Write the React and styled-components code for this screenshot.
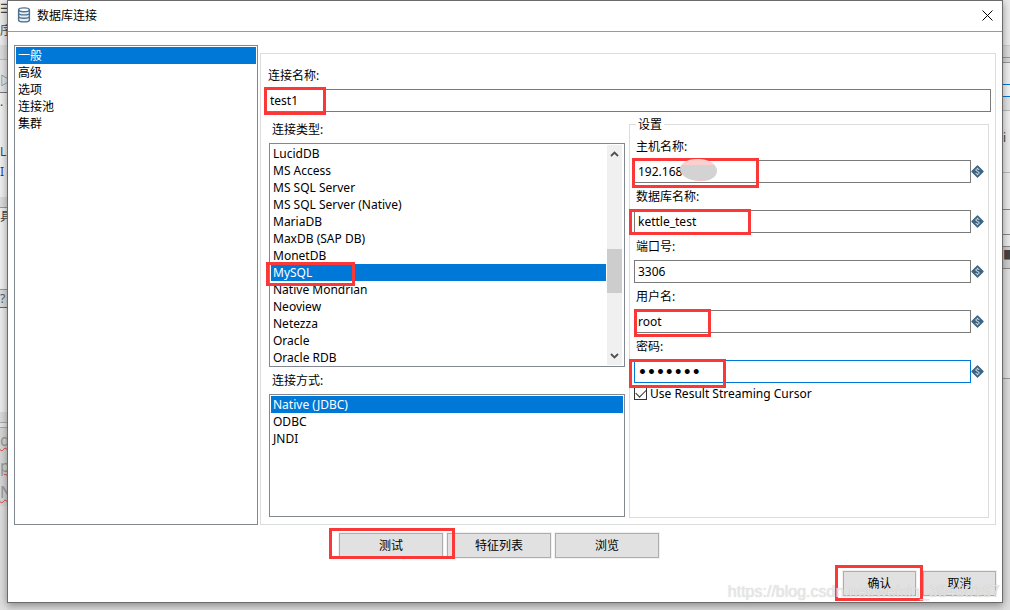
import React, { useState } from "react";
import styled, { createGlobalStyle, ThemeProvider } from "styled-components";

const theme = {
  colors: {
    frame: "#6b6b6b",
    field: "#7a7a7a",
    list: "#828790",
    group: "#dcdcdc",
    blue: "#0078d7",
    mark: "#fb3838",
    button: "#e1e1e1",
    buttonLine: "#adadad",
    steel: "#3d6480",
  },
};

const GlobalStyle = createGlobalStyle`
  * {
    box-sizing: border-box;
  }
  body {
    margin: 0;
    background: #dadada;
    color: #000;
    font-family: "Noto Sans", "Noto Sans CJK SC", sans-serif;
    font-size: 12px;
    line-height: 17px;
  }
  button, input {
    font: inherit;
    color: inherit;
  }
`;

const Desktop = styled.div`
  display: grid;
  grid-template-columns: 7px 1fr 7px;
  min-height: 100vh;
  overflow: hidden;
`;

const Strip = styled.div`
  display: flex;
  flex-direction: column;
  overflow: hidden;
  background: #dedede;
`;

const Slice = styled.div`
  flex: none;
  overflow: hidden;
  height: ${(props) => props.$height}px;
  background: ${(props) => props.$fill || "#ececec"};
  border-bottom: 1px solid ${(props) => props.$line || "transparent"};
  color: ${(props) => props.$ink || "#444"};
  white-space: nowrap;
`;

const Misspelt = styled.div`
  flex: none;
  height: 26px;
  overflow: hidden;
  background: #d6d6d6;
  color: #999;
  font-size: 16px;
  line-height: 24px;
  text-decoration: underline wavy #e04040 1px;
`;

const Dialog = styled.form`
  position: relative;
  display: flex;
  flex-direction: column;
  min-width: 0;
  margin-bottom: 7px;
  background: #fff;
  border: 1px solid ${({ theme: { colors } }) => colors.frame};
  box-shadow: 0 2px 8px rgba(0, 0, 0, 0.4);
`;

const TitleBar = styled.header`
  display: flex;
  align-items: center;
  gap: 6px;
  height: 31px;
  padding: 0 7px 2px 9px;
  border-bottom: 1px solid #999;
`;

const Title = styled.h1`
  flex: 1;
  margin: 0;
  font-size: 12px;
  font-weight: 400;
`;

const CloseButton = styled.button`
  display: flex;
  padding: 2px;
  border: 0;
  background: none;
`;

const Body = styled.div`
  display: flex;
  flex: 1;
  gap: 2px;
  padding: 13px 6px 0;
`;

const List = styled.ul`
  flex: ${(props) => (props.$grow ? 1 : "none")};
  min-width: 0;
  margin: 0;
  padding: 1px;
  list-style: none;
  border: 1px solid ${({ theme: { colors } }) => colors.list};
`;

const Sidebar = styled(List)`
  flex: none;
  width: 244px;
`;

const Option = styled.li`
  position: relative;
  height: 17px;
  padding-left: 2px;
  white-space: nowrap;
  cursor: default;
  color: ${(props) => (props.$active ? "#fff" : "#000")};
  background: ${(props) => (props.$active ? props.theme.colors.blue : "transparent")};
`;

const ScrollFrame = styled.div`
  display: grid;
  grid-template-columns: 1fr 17px;
  border: 1px solid ${({ theme: { colors } }) => colors.list};

  ${List} {
    padding-bottom: 0;
    border: 0;
  }
`;

const ScrollTrack = styled.div`
  display: flex;
  flex-direction: column;
  align-items: center;
  margin: 1px 2px 1px 0;
  padding: 6px 0;
  background: #f0f0f0;
`;

const ScrollThumb = styled.div`
  width: 15px;
  height: 44px;
  margin: 92px 0 auto;
  background: #cdcdcd;
`;

const Panel = styled.section`
  display: flex;
  flex: 1;
  flex-direction: column;
  min-width: 0;
  margin-top: 8px;
  padding: 13px 6px 6px 8px;
  border: 1px solid ${({ theme: { colors } }) => colors.group};
`;

const NameRow = styled.div`
  display: flex;
  flex-direction: column;
  gap: 5px;
  margin: 0 -2px 0 -3px;
`;

const Label = styled.label`
  padding-left: 2px;
`;

const Caption = styled.div`
  padding-left: 3px;
`;

const InputWrap = styled.div`
  position: relative;
  display: flex;
  flex: 1;
  min-width: 0;
`;

const TextInput = styled.input`
  flex: 1;
  min-width: 0;
  height: 23px;
  padding: 0 3px;
  background: #fff;
  border: 1px solid ${(props) => (props.$current ? props.theme.colors.blue : props.theme.colors.field)};
  border-radius: 0;
  outline: none;

  &[type="password"] {
    font-family: "DejaVu Sans", sans-serif;
    font-size: 14px;
    font-weight: 700;
  }
`;

const Columns = styled.div`
  display: grid;
  grid-template-columns: 89fr 90fr;
  flex: 1;
  gap: 4px;
  padding-top: 9px;
`;

const Column = styled.div`
  display: flex;
  flex-direction: column;
  gap: 5px;
  min-width: 0;
  padding-bottom: 1px;
`;

const Settings = styled.fieldset`
  min-width: 0;
  margin: 0;
  padding: 11px 4px 0 4px;
  border: 1px solid ${({ theme: { colors } }) => colors.group};
`;

const Legend = styled.legend`
  height: 6px;
  margin-left: 2px;
  padding: 0 2px;
  line-height: 8px;
`;

const FieldStack = styled.div`
  display: flex;
  flex-direction: column;
  gap: 5px;
  padding-bottom: 2px;
`;

const Field = styled.div`
  display: flex;
  flex-direction: column;
  gap: 5px;
`;

const FieldRow = styled.div`
  display: flex;
  align-items: center;
`;

const CheckRow = styled.label`
  display: flex;
  align-items: center;
  gap: 3px;
`;

const Checkbox = styled.input`
  appearance: none;
  width: 13px;
  height: 13px;
  margin: 0;
  border: 1px solid #333;
  background: #fff;

  &:checked::after {
    content: "";
    display: block;
    width: 9px;
    height: 5px;
    margin: 2px 0 0 1px;
    border: solid #333;
    border-width: 0 0 1px 1px;
    transform: translateY(-1px) rotate(-45deg);
  }
`;

const Actions = styled.div`
  display: flex;
  justify-content: ${(props) => props.$align};
  gap: ${(props) => props.$gap}px;
  padding: ${(props) => props.$pad};
`;

const ButtonWrap = styled.div`
  position: relative;
  display: flex;
`;

const PushButton = styled.button`
  width: ${(props) => (props.$wide ? 104 : 73)}px;
  height: 25px;
  padding: 0;
  border: 1px solid ${({ theme: { colors } }) => colors.buttonLine};
  background: ${({ theme: { colors } }) => colors.button};
  outline: 1px solid #f0f0f0;
`;

/* red marker: $at is [left, top, width, height] relative to the control */
const Mark = styled.span`
  position: absolute;
  z-index: 2;
  left: ${(props) => props.$at[0]}px;
  top: ${(props) => props.$at[1]}px;
  width: ${(props) => props.$at[2]}px;
  height: ${(props) => props.$at[3]}px;
  border: 3px solid ${({ theme: { colors } }) => colors.mark};
  pointer-events: none;
`;

const Smudge = styled.span`
  position: absolute;
  z-index: 3;
  left: 46px;
  top: -1px;
  width: 37px;
  height: 22px;
  border-radius: 16px 18px 14px 20px / 10px 12px 10px 12px;
  background: linear-gradient(#fbcfce 0 6px, #d3d3d3 6px 20px, #f3c4c4 20px);
`;

const Watermark = styled.span`
  position: absolute;
  z-index: 4;
  right: 2px;
  bottom: 1px;
  color: rgba(238, 238, 238, 0.8);
  font-family: "Liberation Sans", sans-serif;
  font-size: 16px;
  line-height: 18px;
  text-shadow: 0 0 1px rgba(160, 160, 160, 0.6);
  pointer-events: none;
`;

const DatabaseIcon = () => (
  <svg width="14" height="16" viewBox="0 0 14 16" fill="none" stroke="#4a7190" strokeWidth="1.4">
    <path d="M1.600 3v10c0 1.100 2.400 1.900 5.400 1.900s5.400-.8 5.400-1.900V3" fill="#e8eff4" />
    <path d="M1.600 6.200c0 1.100 2.400 1.700 5.400 1.700s5.400-.6 5.400-1.700M1.600 9.600c0 1.100 2.400 1.700 5.400 1.700s5.400-.6 5.400-1.700" />
    <ellipse cx="7" cy="2.800" rx="5.400" ry="1.900" fill="#fff" />
  </svg>
);

const VariableIcon = () => (
  <svg width="13" height="13" viewBox="0 0 13 13">
    <path
      d="M6.500 1L12 6.500 6.500 12 1 6.500z"
      fill={theme.colors.steel}
      stroke={theme.colors.steel}
      strokeWidth="1.4"
      strokeLinejoin="round"
    />
    <path
      d="M8.100 4.900C8 4.200 7.400 3.800 6.500 3.800 5.600 3.800 4.900 4.200 4.900 5 4.900 6.800 8.100 6 8.100 7.900 8.100 8.700 7.400 9.200 6.500 9.200 5.600 9.200 5 8.800 4.800 8M6.500 2.800v1M6.500 9.200v1"
      fill="none"
      stroke="#e4ebf0"
      strokeWidth="1"
    />
  </svg>
);

const Chevron = ({ down }) => (
  <svg width="9" height="6" viewBox="0 0 9 6" fill="none" stroke="#505050" strokeWidth="1.800">
    <path d={down ? "M1 1l3.500 3.500L8 1" : "M1 5l3.500-3.500L8 5"} />
  </svg>
);

const pages = ["一般", "高级", "选项", "连接池", "集群"];

const databases = [
  "LucidDB",
  "MS Access",
  "MS SQL Server",
  "MS SQL Server (Native)",
  "MariaDB",
  "MaxDB (SAP DB)",
  "MonetDB",
  "MySQL",
  "Native Mondrian",
  "Neoview",
  "Netezza",
  "Oracle",
  "Oracle RDB",
];

const accessTypes = ["Native (JDBC)", "ODBC", "JNDI"];

const fields = [
  { id: "host", label: "主机名称:", value: "192.168", mark: [-2, -2, 127, 30], smudge: true },
  { id: "database", label: "数据库名称:", value: "kettle_test", mark: [-5, -1, 122, 26] },
  { id: "port", label: "端口号:", value: "3306" },
  { id: "user", label: "用户名:", value: "root", mark: [0, -1, 77, 28] },
  { id: "password", label: "密码:", value: "kettle1", type: "password", current: true, mark: [-5, -1, 97, 29] },
];

const ListBox = ({ as: Box = List, label, items, initial, marked, grow }) => {
  const [active, setActive] = useState(initial);

  return (
    <Box role="listbox" aria-label={label} $grow={grow}>
      {items.map((item) => (
        <Option
          key={item}
          role="option"
          aria-selected={item === active}
          $active={item === active}
          onClick={() => setActive(item)}
        >
          {item}
          {item === marked && <Mark $at={[-5, -2, 89, 24]} />}
        </Option>
      ))}
    </Box>
  );
};

const SettingField = ({ id, label, value, type = "text", current, mark, smudge }) => (
  <Field>
    <Label htmlFor={id}>{label}</Label>
    <FieldRow>
      <InputWrap>
        <TextInput id={id} type={type} defaultValue={value} $current={current} />
        {mark && <Mark $at={mark} />}
        {smudge && <Smudge />}
      </InputWrap>
      <VariableIcon />
    </FieldRow>
  </Field>
);

const App = () => {
  return (
    <ThemeProvider theme={theme}>
      <GlobalStyle />
      <Desktop>
        <Strip aria-hidden="true">
          <Slice $height={22} $fill="#ececec">☰</Slice>
          <Slice $height={23} $fill="#ececec">序</Slice>
          <Slice $height={15} $fill="#dcdcdc" $line="#bbb" />
          <Slice $height={12} $fill="#e6e6e6" />
          <Slice $height={21} $line="#777" $fill="#e6e6e6" $ink="#3d6480">▷</Slice>
          <Slice $height={50} $fill="#f0f0f0">. 表</Slice>
          <Slice $height={20} $fill="#f0f0f0">L</Slice>
          <Slice $height={34} $fill="#f0f0f0" $ink="#3030d0">I</Slice>
          <Slice $height={11} $fill="#dcdcdc" $line="#999" />
          <Slice $height={82} $line="#999" $fill="#f0f0f0">具</Slice>
          <Slice $height={18} $line="#666" $fill="#dcdcdc" $ink="#3d6480">?</Slice>
          <Slice $height={104} $fill="#ececec" />
          <Slice $height={11} $fill="#dadada" $line="#aaa" />
          <Slice $height={5} $fill="#e4e4e4" $line="#aaa" />
          <Misspelt>d</Misspelt>
          <Misspelt>p</Misspelt>
          <Misspelt>N</Misspelt>
        </Strip>
        <Dialog onSubmit={(e) => e.preventDefault()}>
          <TitleBar>
            <DatabaseIcon />
            <Title>数据库连接</Title>
            <CloseButton type="button" aria-label="关闭">
              <svg width="11" height="11" viewBox="0 0 11 11" stroke="#000">
                <path d="M.5.5l10 10M10.500.5l-10 10" />
              </svg>
            </CloseButton>
          </TitleBar>
          <Body>
            <ListBox as={Sidebar} label="类别" items={pages} initial="一般" />
            <Panel>
              <NameRow>
                <Label htmlFor="name">连接名称:</Label>
                <InputWrap>
                  <TextInput id="name" defaultValue="test1" />
                  <Mark $at={[-2, -2, 62, 28]} />
                </InputWrap>
              </NameRow>
              <Columns>
                <Column>
                  <Caption>连接类型:</Caption>
                  <ScrollFrame>
                    <ListBox label="连接类型" items={databases} initial="MySQL" marked="MySQL" />
                    <ScrollTrack>
                      <Chevron />
                      <ScrollThumb />
                      <Chevron down />
                    </ScrollTrack>
                  </ScrollFrame>
                  <Caption>连接方式:</Caption>
                  <ListBox label="连接方式" items={accessTypes} initial="Native (JDBC)" grow />
                </Column>
                <Settings>
                  <Legend>设置</Legend>
                  <FieldStack>
                    {fields.map((f) => (
                      <SettingField key={f.id} {...f} />
                    ))}
                  </FieldStack>
                  <CheckRow>
                    <Checkbox type="checkbox" defaultChecked />
                    Use Result Streaming Cursor
                  </CheckRow>
                </Settings>
              </Columns>
            </Panel>
          </Body>
          <Actions $align="center" $gap={4} $pad="8px 12px 0 0">
            <ButtonWrap>
              <PushButton type="button" $wide>测试</PushButton>
              <Mark $at={[-10, -5, 126, 31]} />
            </ButtonWrap>
            <PushButton type="button" $wide>特征列表</PushButton>
            <PushButton type="button" $wide>浏览</PushButton>
          </Actions>
          <Actions $align="flex-end" $gap={7} $pad="13px 6px 6px">
            <ButtonWrap>
              <PushButton type="submit">确认</PushButton>
              <Mark $at={[-8, -6, 88, 36]} />
            </ButtonWrap>
            <PushButton type="button">取消</PushButton>
          </Actions>
          <Watermark>https://blog.csdn.net/weixin_38468167</Watermark>
        </Dialog>
        <Strip aria-hidden="true">
          <Slice $height={46} $fill="#ececec" $line="#ccc" />
          <Slice $height={12} $fill="#dcdcdc" $line="#999" />
          <Slice $height={5} $fill="#d8d8d8" $line="#999" />
          <Slice $height={22} $fill="#f0f0f0" $line="#0078d7" />
          <Slice $height={12} $fill="#f4f4f4" $line="#0078d7" />
          <Slice $height={14} $fill="#e4e4e4" $line="#bbb" />
          <Slice $height={18} $fill="#f0f0f0" />
          <Slice $height={44} $line="#bbb">i</Slice>
          <Slice $height={37} $fill="#ececec" $line="#888" />
          <Slice $height={25} $fill="#ececec" $line="#888" />
          <Slice $height={12} $fill="#ececec" $line="#888" />
          <Slice $height={22} $fill="#cfcfcf" $line="#888">■</Slice>
          <Slice $height={110} $fill="#e2e2e2" $line="#999" />
        </Strip>
      </Desktop>
    </ThemeProvider>
  );
};

export default App;
